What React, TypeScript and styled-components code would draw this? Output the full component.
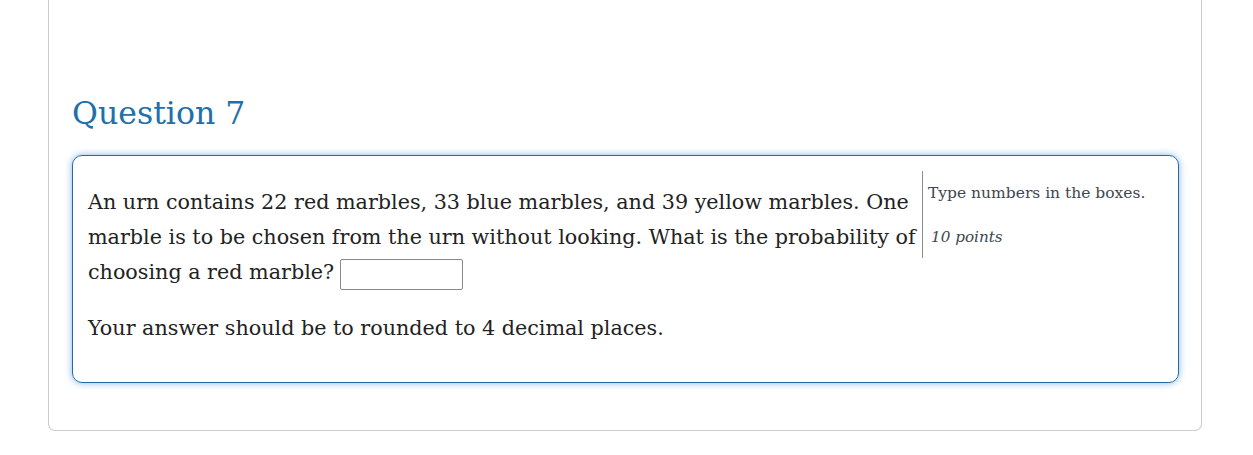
import React from "react";
import styled, { createGlobalStyle } from "styled-components";

const GlobalStyle = createGlobalStyle`
  html, body {
    margin: 0;
    padding: 0;
    background: #ffffff;
  }
  body {
    font-family: "DejaVu Serif", "Liberation Serif", serif;
    color: #222222;
  }
`;

const Page = styled.div`
  padding: 0 51px 0 48px;
  width: 1253px;
  box-sizing: border-box;
`;

const Card = styled.section`
  border: 1px solid #cccccc;
  border-top: none;
  border-radius: 0 0 7px 7px;
  padding: 93px 22px 47px 23px;
`;

const Heading = styled.h2`
  margin: 0 0 22px 0;
  font-family: "DejaVu Serif", "Liberation Serif", serif;
  font-weight: normal;
  font-size: 31.6px;
  line-height: 40px;
  color: #2270a9;
`;

const QuestionBox = styled.div`
  border: 1px solid #236ba8;
  border-radius: 10px;
  box-shadow: 0 0 7px rgba(60, 140, 215, 0.65);
  padding: 15px;
  display: flex;
  align-items: flex-start;
`;

const Body = styled.div`
  flex: 1;
  min-width: 0;
`;

const Paragraph = styled.p<{ $first?: boolean }>`
  margin: ${(p) => (p.$first ? "14px" : "20px")} 0 21px 0;
  font-size: 20.7px;
  line-height: 35px;
  color: #222222;
`;

const AnswerInput = styled.input`
  width: 123px;
  height: 31px;
  box-sizing: border-box;
  border: 1px solid #8a8a8a;
  border-radius: 2px;
  margin-left: 6px;
  vertical-align: middle;
  position: relative;
  top: 1px;
  font-size: 16px;
  padding: 2px 5px;
`;

const Sidebar = styled.aside`
  width: 241px;
  flex-shrink: 0;
  border-left: 1px solid #8c8c8c;
  padding: 10px 0 10px 5px;
  box-sizing: border-box;
  color: #3e4651;
`;

const Instructions = styled.div`
  font-size: 15.5px;
  line-height: 24px;
`;

const Points = styled.div`
  margin-top: 21px;
  padding-left: 3px;
  font-size: 15.2px;
  line-height: 22px;
  font-style: italic;
`;

export default function App() {
  return (
    <>
      <GlobalStyle />
      <Page>
        <Card>
          <Heading>Question 7</Heading>
          <QuestionBox>
            <Body>
              <Paragraph $first>
                An urn contains 22 red marbles, 33 blue marbles, and 39 yellow
                marbles. One marble is to be chosen from the urn without
                looking. What is the probability of choosing a red marble?
                <AnswerInput type="text" aria-label="answer" />
              </Paragraph>
              <Paragraph>
                Your answer should be to rounded to 4 decimal places.
              </Paragraph>
            </Body>
            <Sidebar>
              <Instructions>Type numbers in the boxes.</Instructions>
              <Points>10 points</Points>
            </Sidebar>
          </QuestionBox>
        </Card>
      </Page>
    </>
  );
}
